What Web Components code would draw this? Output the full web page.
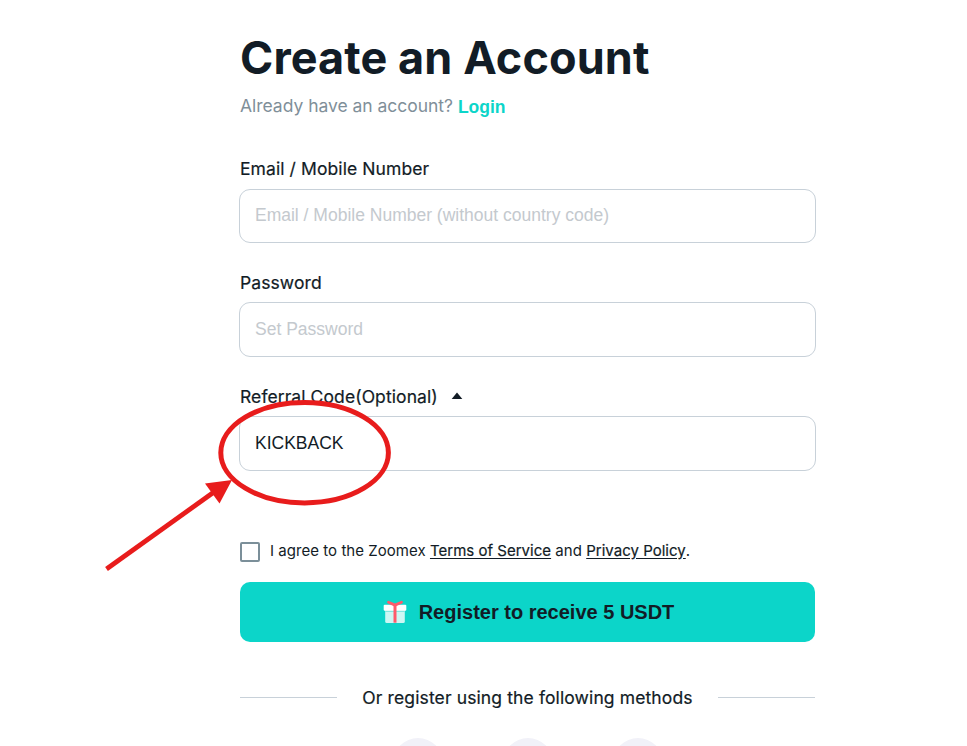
<!DOCTYPE html>
<html lang="en">
<head>
<meta charset="UTF-8">
<title>Create an Account</title>
<style>
    body {
        margin: 0;
        height: 746px;
        overflow: hidden;
        background: #fff;
        color: #121c26;
        font-family: Inter, "Liberation Sans", sans-serif;
        font-size: 17.5px;
    }
</style>
</head>
<body>
<register-page></register-page>

<script>
class FormField extends HTMLElement {
    constructor() {
        super();
        this.attachShadow({ mode: 'open' });
        this.shadowRoot.innerHTML = `
            <style>
                :host {
                    display: block;
                    height: 114px;
                }
                label {
                    display: flex;
                    align-items: center;
                    height: 24px;
                    margin-bottom: 8px;
                    letter-spacing: 0.09px;
                    -webkit-text-stroke: 0.2px;
                    white-space: nowrap;
                }
                input {
                    display: block;
                    box-sizing: border-box;
                    width: 577px;
                    height: 55px;
                    margin: 0 -1px;
                    padding: 0 15px 1px;
                    border: 1px solid #c8d1d9;
                    border-radius: 11px;
                    outline: none;
                    background: #fff;
                    color: #121c26;
                    font: 17.5px "Liberation Sans", Arial, sans-serif;
                }
                :host(:first-of-type) input {
                    height: 54px;
                    margin-top: 9px;
                    padding-bottom: 2px;
                }
                :host(:first-of-type) label {
                    margin-bottom: 0;
                }
                input::placeholder {
                    color: #c4c9ce;
                    opacity: 1;
                }
            </style>
            <label for="field"><span class="text"></span><slot></slot></label>
            <input id="field" type="text">
        `;
    }

    connectedCallback() {
        const input = this.shadowRoot.querySelector('input');
        this.shadowRoot.querySelector('.text').textContent = this.getAttribute('label');
        input.placeholder = this.getAttribute('placeholder') || '';
        input.value = this.getAttribute('value') || '';
        input.type = this.getAttribute('type') || 'text';
    }
}

class AgreeTerms extends HTMLElement {
    constructor() {
        super();
        this.attachShadow({ mode: 'open' });
        this.shadowRoot.innerHTML = `
            <style>
                :host {
                    display: flex;
                    align-items: center;
                    gap: 10px;
                    height: 22px;
                    font-size: 15px;
                    letter-spacing: 0.04px;
                    white-space: nowrap;
                }
                input {
                    appearance: none;
                    box-sizing: border-box;
                    width: 20px;
                    height: 20px;
                    margin: 3px 0 0;
                    border: 2px solid #7b8f99;
                    border-radius: 2px;
                }
                a {
                    color: inherit;
                    letter-spacing: 0.02px;
                    -webkit-text-stroke: 0.2px;
                    text-decoration: underline;
                    text-underline-offset: 2px;
                }
            </style>
            <input type="checkbox" id="agree">
            <label for="agree">I agree to the Zoomex <a>Terms of Service</a> and <a>Privacy Policy</a>.</label>
        `;
    }
}

class RegisterButton extends HTMLElement {
    constructor() {
        super();
        this.attachShadow({ mode: 'open' });
        this.shadowRoot.innerHTML = `
            <style>
                :host {
                    display: block;
                }
                button {
                    display: flex;
                    align-items: center;
                    justify-content: center;
                    gap: 12px;
                    width: 100%;
                    height: 60px;
                    padding: 0 0 0 2px;
                    border: none;
                    border-radius: 10px;
                    background: #0cd5c9;
                    color: #121c26;
                    font: bold 20px "Liberation Sans", Arial, sans-serif;
                    white-space: nowrap;
                }
                svg {
                    display: block;
                }
            </style>
            <button>
                <svg width="24" height="24" viewBox="0 0 24 24">
                    <rect x="2.2" y="9" width="19.6" height="14" rx="1.5" fill="#cdf7f4"/>
                    <rect x="2.2" y="10" width="19.6" height="2" fill="#83e8e1"/>
                    <rect x="0.7" y="4.7" width="22.6" height="6" rx="1" fill="#fff"/>
                    <path d="M12 4.5V22.7" stroke="#ff5a6b" stroke-width="3" fill="none"/>
                    <path d="M5.5 2.2l6.5 2.9 6.5-2.9" stroke="#ff5a6b" stroke-width="2.8" stroke-linejoin="round" stroke-linecap="round" fill="none"/>
                </svg>
                <slot></slot>
            </button>
        `;
    }
}

class OtherMethods extends HTMLElement {
    constructor() {
        super();
        this.attachShadow({ mode: 'open' });
        this.shadowRoot.innerHTML = `
            <style>
                :host {
                    display: block;
                }
                .divider {
                    display: flex;
                    align-items: center;
                    gap: 25px;
                    height: 24px;
                    letter-spacing: 0.12px;
                    -webkit-text-stroke: 0.2px;
                    white-space: nowrap;
                }
                .divider::before, .divider::after {
                    content: "";
                    flex: 1;
                    height: 1px;
                    background: #c8d1d9;
                }
                .icons {
                    display: flex;
                    justify-content: center;
                    gap: 60px;
                    margin-top: 29px;
                }
                .icons i {
                    width: 50px;
                    height: 50px;
                    border-radius: 50%;
                    background: #f1f1f8;
                }
            </style>
            <div class="divider"><slot></slot></div>
            <div class="icons"><i></i><i></i><i></i></div>
        `;
    }
}

// red ellipse and arrow drawn over the form
class HighlightMark extends HTMLElement {
    constructor() {
        super();
        this.attachShadow({ mode: 'open' });
        this.shadowRoot.innerHTML = `
            <style>
                :host {
                    position: absolute;
                    top: 0;
                    left: 0;
                    pointer-events: none;
                }
                svg {
                    display: block;
                }
            </style>
            <svg width="967" height="746" viewBox="0 0 967 746">
                <ellipse cx="304.6" cy="452.7" rx="83.8" ry="50.2" fill="none" stroke="#e81c1c" stroke-width="5"/>
                <path d="M106.5 569L214 492" stroke="#e81c1c" stroke-width="4.8"/>
                <path d="M232 480L205 483.5L219.5 503.5Z" fill="#e81c1c"/>
            </svg>
        `;
    }
}

class RegisterPage extends HTMLElement {
    constructor() {
        super();
        this.attachShadow({ mode: 'open' });
        this.shadowRoot.innerHTML = `
            <style>
                :host {
                    display: block;
                    height: 746px;
                    overflow: hidden;
                }
                main {
                    width: 575px;
                    margin-left: 240px;
                    padding-top: 30px;
                }
                h1 {
                    margin: 0;
                    font-size: 45px;
                    line-height: 56px;
                    font-weight: 700;
                    letter-spacing: 0.1px;
                    white-space: nowrap;
                }
                .login {
                    display: flex;
                    align-items: center;
                    gap: 5px;
                    height: 24px;
                    margin: 7px 0 39px;
                    color: #7f8f99;
                    letter-spacing: -0.03px;
                }
                .login a {
                    padding-top: 4px;
                    color: #0cd5c9;
                    font: bold 17.5px "Liberation Sans", Arial, sans-serif;
                }
                .arrow {
                    margin-left: 13px;
                }
                agree-terms {
                    margin: 42px 0 21px;
                }
                other-methods {
                    margin-top: 43px;
                }
                form-field:last-of-type {
                    height: 113px;
                }
            </style>
            <main>
                <h1>Create an Account</h1>
                <div class="login"><span>Already have an account?</span><a>Login</a></div>
                <form-field label="Email / Mobile Number" placeholder="Email / Mobile Number (without country code)"></form-field>
                <form-field label="Password" placeholder="Set Password" type="password"></form-field>
                <form-field label="Referral Code(Optional)" value="KICKBACK">
                    <svg class="arrow" width="12" height="8" viewBox="0 0 12 8"><path d="M6 0.5L11.3 7H0.7Z" fill="#121c26"/></svg>
                </form-field>
                <agree-terms></agree-terms>
                <register-button>Register to receive 5 USDT</register-button>
                <other-methods>Or register using the following methods</other-methods>
            </main>
            <highlight-mark></highlight-mark>
        `;
    }
}

customElements.define('form-field', FormField);
customElements.define('agree-terms', AgreeTerms);
customElements.define('register-button', RegisterButton);
customElements.define('other-methods', OtherMethods);
customElements.define('highlight-mark', HighlightMark);
customElements.define('register-page', RegisterPage);
</script>
</body>
</html>
